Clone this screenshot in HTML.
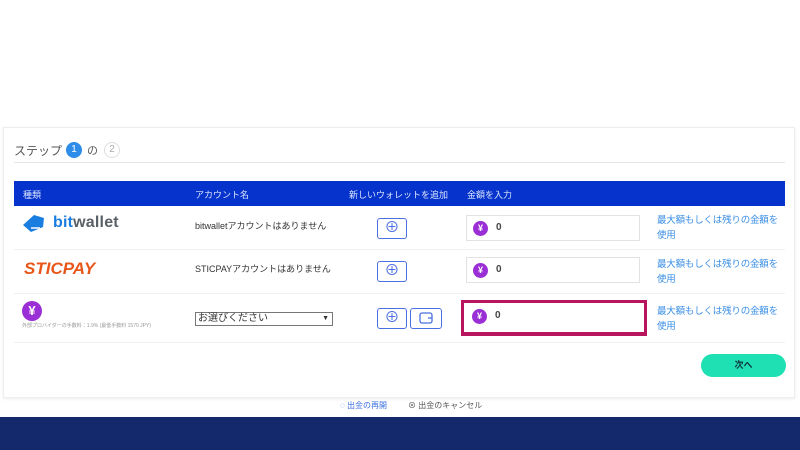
<!DOCTYPE html>
<html><head><meta charset="utf-8"><style>
*{margin:0;padding:0;box-sizing:border-box}
body{width:800px;height:450px;background:#fff;position:relative;overflow:hidden;font-family:"Liberation Sans","Noto Sans CJK JP",sans-serif;color:#333}
.a{position:absolute}
.card{left:3px;top:127px;width:792px;height:271px;border:1px solid #eee;box-shadow:0 1px 3px rgba(0,0,0,.08)}
.hdr{left:14px;top:181px;width:771px;height:25px;background:#0533cc;color:#dde6ff;font-size:9px}
.hdr span{position:absolute;top:7px}
.row{left:14px;width:771px;border-bottom:1px solid #eef0f4}
.t{font-size:9px;color:#333}
.btn{width:30px;height:21px;border:1.5px solid #4a6fe0;border-radius:3px;background:#fff;color:#4a6fe0;font-size:15px;line-height:17px;text-align:center}
.inp{width:174px;height:26px;border:1px solid #e2e2e2;background:#fff}
.yen{position:absolute;left:6px;top:5px;width:15px;height:15px;border-radius:50%;background:#9b2fd6;color:#fff;font-size:9px;font-weight:bold;text-align:center;line-height:15px}
.zero{position:absolute;left:29px;top:6px;font-size:10px;font-weight:bold;color:#444}
.lnk{font-size:9.5px;color:#3a8ee6;line-height:15px;width:130px;letter-spacing:-.2px}
</style></head><body>
<div class="a card"></div>
<div class="a" style="left:14px;top:142px;font-size:12px;color:#555">ステップ：</div>
<div class="a" style="left:66px;top:142px;width:16px;height:16px;border-radius:50%;background:#2e8de8;color:#fff;font-size:10px;text-align:center;line-height:16px">1</div>
<div class="a" style="left:87px;top:142px;font-size:11px;color:#555">の</div>
<div class="a" style="left:104px;top:142px;width:16px;height:16px;border-radius:50%;border:1px solid #ddd;color:#aaa;font-size:10px;text-align:center;line-height:14px">2</div>
<div class="a" style="left:14px;top:162px;width:771px;height:1px;background:#e6e6e6"></div>
<div class="a hdr"><span style="left:9px">種類</span><span style="left:181px">アカウント名</span><span style="left:335px">新しいウォレットを追加</span><span style="left:453px">金額を入力</span></div>

<div class="a row" style="top:206px;height:44px"></div>
<div class="a row" style="top:250px;height:44px"></div>
<div class="a row" style="top:294px;height:49px"></div>

<svg class="a" style="left:22px;top:214px" width="28" height="20" viewBox="0 0 28 20"><path d="M1 11 L12 1 L22 4 L21 13 L9 18 Z" fill="#1a7de0"/><path d="M9 14h9" stroke="#fff" stroke-width="1.5"/></svg>
<div class="a" style="left:53px;top:214px;font-size:16px;font-weight:bold;color:#5a6068;letter-spacing:.2px"><span style="color:#1a7de0">bit</span>wallet</div>
<div class="a" style="left:24px;top:259px;font-size:17px;font-weight:bold;font-style:italic;color:#e8561a">STICPAY</div>
<div class="a" style="left:22px;top:301px;width:20px;height:20px;border-radius:50%;background:#9b2fd6;color:#fff;font-size:13px;font-weight:bold;text-align:center;line-height:20px">¥</div>
<div class="a" style="left:22px;top:322px;font-size:5px;color:#999">外部プロバイダーの手数料：1.9% (最低手数料 1570 JPY)</div>

<div class="a t" style="left:195px;top:219px">bitwalletアカウントはありません</div>
<div class="a t" style="left:195px;top:262px">STICPAYアカウントはありません</div>
<div class="a" style="left:195px;top:312px;width:138px;height:14px;border:1px solid #777;font-size:10px;line-height:12px;padding-left:2px;background:#fff">お選びください<span style="position:absolute;right:3px;font-size:7px">▼</span></div>

<div class="a btn" style="left:377px;top:218px">⊕</div>
<div class="a btn" style="left:377px;top:261px">⊕</div>
<div class="a btn" style="left:377px;top:308px">⊕</div>
<div class="a btn" style="left:410px;top:308px;width:32px"><svg width="14" height="12" viewBox="0 0 14 12" style="margin-top:3px"><rect x="1" y="1" width="12" height="10" rx="2" fill="none" stroke="#4a6fe0" stroke-width="1.3"/><path d="M9 6h4" stroke="#4a6fe0" stroke-width="1.3"/></svg></div>

<div class="a inp" style="left:466px;top:215px"><div class="yen">¥</div><div class="zero">0</div></div>
<div class="a inp" style="left:466px;top:257px"><div class="yen">¥</div><div class="zero">0</div></div>
<div class="a" style="left:461px;top:300px;width:186px;height:36px;border:3px solid #b8155f;border-bottom-width:4px"></div>
<div class="a inp" style="left:466px;top:304px;border:none"><div class="yen">¥</div><div class="zero">0</div></div>

<div class="a lnk" style="left:657px;top:213px">最大額もしくは残りの金額を使用</div>
<div class="a lnk" style="left:657px;top:257px">最大額もしくは残りの金額を使用</div>
<div class="a lnk" style="left:657px;top:304px">最大額もしくは残りの金額を使用</div>

<div class="a" style="left:701px;top:354px;width:85px;height:23px;border-radius:12px;background:#1ee0b2;color:#134;font-size:9px;font-weight:bold;text-align:center;line-height:23px">次へ</div>

<div class="a" style="left:340px;top:400px;font-size:8px;color:#3a6fe0">◌ 出金の再開</div>
<div class="a" style="left:408px;top:400px;font-size:8px;color:#555">⊗ 出金のキャンセル</div>
<div class="a" style="left:0;top:417px;width:800px;height:33px;background:#13296b"></div>
</body></html>
